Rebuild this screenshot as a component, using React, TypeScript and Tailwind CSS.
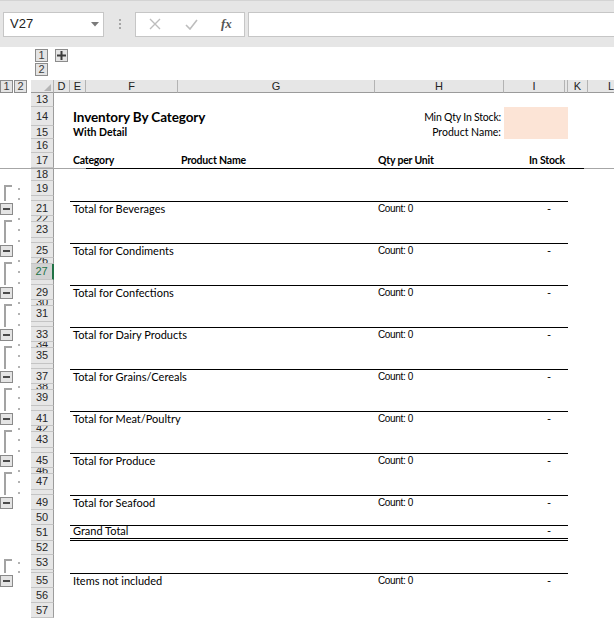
import React from 'react'

type Outline = 's' | 'm' | 'x'
type Kind = 'title' | 'sub' | 'hdr' | 'total' | 'grand' | 'items' | 'freeze'

type RowDef = {
  n: string
  h: number
  ol?: Outline
  kind?: Kind
  label?: string
}

const HEIGHT: Record<number, string> = {
  1: 'h-[1px]',
  3: 'h-[3px]',
  5: 'h-[5px]',
  6: 'h-[6px]',
  12: 'h-[12px]',
  13: 'h-[13px]',
  14: 'h-[14px]',
  15: 'h-[15px]',
  16: 'h-[16px]',
  19: 'h-[19px]',
}

const cats = ['Beverages', 'Condiments', 'Confections', 'Dairy Products', 'Grains/Cereals', 'Meat/Poultry', 'Produce', 'Seafood']

function buildRows(): RowDef[] {
  const rows: RowDef[] = [
    { n: '13', h: 14 },
    { n: '14', h: 19, kind: 'title' },
    { n: '15', h: 13, kind: 'sub' },
    { n: '16', h: 14 },
    { n: '17', h: 15, kind: 'hdr' },
    { n: '', h: 1, kind: 'freeze' },
    { n: '18', h: 12 },
    { n: '19', h: 15, ol: 's' },
    { n: '20', h: 5, ol: 'm' },
    { n: '21', h: 15, ol: 'x', kind: 'total', label: 'Total for Beverages' },
  ]
  for (let i = 1; i < cats.length; i++) {
    const base = 22 + 4 * (i - 1)
    rows.push({ n: String(base), h: 6, ol: 's' })
    rows.push({ n: String(base + 1), h: 16, ol: 'm' })
    rows.push({ n: String(base + 2), h: 5, ol: 'm' })
    rows.push({ n: String(base + 3), h: 15, ol: 'x', kind: 'total', label: `Total for ${cats[i]}` })
  }
  rows.push(
    { n: '50', h: 15 },
    { n: '51', h: 16, kind: 'grand' },
    { n: '52', h: 14 },
    { n: '53', h: 15, ol: 's' },
    { n: '54', h: 3, ol: 'm' },
    { n: '55', h: 15, ol: 'x', kind: 'items', label: 'Items not included' },
    { n: '56', h: 15 },
    { n: '57', h: 15 },
  )
  return rows
}

const calibri = "font-['Lato','Noto_Sans',sans-serif]"
const arial = "font-['Liberation_Sans',Arial,sans-serif]"

function Dot() {
  return <div className="absolute left-[18px] top-1/2 h-[2px] w-[2px] -translate-y-1/2 bg-[#b3b3b3]" />
}

function OutlineCell({ ol }: { ol?: Outline }) {
  return (
    <div className="relative w-[31px] shrink-0">
      {ol === 's' ? (
        <>
          <div className="absolute bottom-0 left-[4px] top-[4px] w-[2px] bg-[#a3a3a3]" />
          <div className="absolute left-[4px] top-[4px] h-[2px] w-[8px] bg-[#a3a3a3]" />
          <Dot />
        </>
      ) : null}
      {ol === 'm' ? (
        <>
          <div className="absolute bottom-0 left-[4px] top-0 w-[2px] bg-[#a3a3a3]" />
          <Dot />
        </>
      ) : null}
      {ol === 'x' ? (
        <div className="absolute left-0 top-1/2 flex h-[12px] w-[13px] -translate-y-1/2 items-center justify-center border border-[#8a8a8a] bg-[#e4e4e4]">
          <div className="h-[2px] w-[7px] bg-[#4a4a4a]" />
        </div>
      ) : null}
    </div>
  )
}

function RowHeader({ n, h, selected }: { n: string; h: number; selected: boolean }) {
  return (
    <div
      className={
        selected
          ? `flex w-[23px] shrink-0 items-center justify-center overflow-hidden border-b border-r-2 border-b-[#c4c4c4] border-r-[#217346] bg-[#d2d2d2] text-[11px] leading-none text-[#217346] ${arial}`
          : `flex w-[23px] shrink-0 items-center justify-center overflow-hidden border-b border-r border-b-[#c4c4c4] border-r-[#9c9c9c] bg-[#e6e6e6] text-[11px] leading-none text-[#262626] ${arial}`
      }
    >
      {h > 5 ? n : null}
    </div>
  )
}

function SpanContent({ r }: { r: RowDef }) {
  const text = `whitespace-nowrap text-[11px] leading-[13px] text-black ${calibri}`
  const small = `whitespace-nowrap text-[10.5px] leading-[13px] text-black ${calibri}`
  if (r.kind === 'title') {
    return (
      <div className="flex h-full items-end">
        <div className="w-[305px] pb-[1px] pl-[3px]">
          <div className={`whitespace-nowrap text-[13.5px] font-bold leading-[16px] tracking-[-0.1px] text-black ${calibri}`}>
            Inventory By Category
          </div>
        </div>
        <div className={`w-[129px] pb-[2px] pr-[3px] text-right tracking-[-0.2px] ${small}`}>Min Qty In Stock:</div>
        <div className="h-full w-[64px] bg-[#fce4d6]" />
      </div>
    )
  }
  if (r.kind === 'sub') {
    return (
      <div className="flex h-full items-end">
        <div className={`w-[305px] pl-[3px] font-bold ${small}`}>With Detail</div>
        <div className={`w-[129px] pr-[3px] text-right ${small}`}>Product Name:</div>
        <div className="h-full w-[64px] bg-[#fce4d6]" />
      </div>
    )
  }
  if (r.kind === 'hdr') {
    return (
      <div className={`flex h-full items-end pb-[1px] font-bold tracking-[-0.2px] ${small}`}>
        <div className="w-[108px] pl-[3px]">Category</div>
        <div className="w-[197px] pl-[3px]">Product Name</div>
        <div className="w-[129px] pl-[3px]">Qty per Unit</div>
        <div className="w-[64px] pr-[3px] text-right">In Stock</div>
      </div>
    )
  }
  if (r.kind === 'total' || r.kind === 'items' || r.kind === 'grand') {
    return (
      <div className="flex h-full items-end pb-[1px]">
        <div className={`w-[305px] pl-[3px] ${text}`}>{r.kind === 'grand' ? 'Grand Total' : r.label}</div>
        <div className={`w-[129px] pl-[3px] text-[10px] leading-[13px] tracking-[-0.35px] text-black ${arial}`}>
          {r.kind === 'grand' ? '' : 'Count: 0'}
        </div>
        <div className={`w-[64px] pr-[17px] text-right ${text}`}>-</div>
      </div>
    )
  }
  return null
}

function SheetRow({ r }: { r: RowDef }) {
  if (r.kind === 'freeze') {
    return (
      <div className="flex h-[1px] bg-[#a6a6a6]">
        <div className="w-[86px] shrink-0" />
        <div className="h-full w-[498px] shrink-0 bg-black" />
      </div>
    )
  }
  let spanBorder = ''
  if (r.kind === 'total' || r.kind === 'items') spanBorder = 'border-t border-black'
  if (r.kind === 'grand') spanBorder = 'border-t border-b-[3px] border-double border-black'
  return (
    <div className={`flex ${HEIGHT[r.h]}`}>
      <OutlineCell ol={r.ol} />
      <RowHeader n={r.n} h={r.h} selected={r.n === '27'} />
      <div className="w-[16px] shrink-0" />
      <div className={`w-[498px] shrink-0 ${spanBorder}`}>
        <SpanContent r={r} />
      </div>
      <div className="flex-1" />
    </div>
  )
}

function LevelButton({ label }: { label: string }) {
  return (
    <div className={`flex h-[13px] w-[13px] items-center justify-center border border-[#8c8c8c] bg-[#e4e4e4] text-[11px] leading-none text-[#3c3c3c] ${arial}`}>
      {label}
    </div>
  )
}

function ColHeader({ label, w }: { label: string; w: string }) {
  return (
    <div className={`flex shrink-0 items-center justify-center border-b border-r border-b-[#9b9b9b] border-r-[#b3b3b3] bg-[#e6e6e6] text-[11px] leading-none text-[#222] ${w} ${arial}`}>
      {label}
    </div>
  )
}

export default function App() {
  const rows = buildRows()
  return (
    <div className="h-[618px] w-[614px] overflow-hidden bg-white">
      {/* formula bar */}
      <div className="flex h-[47px] items-center border-t border-[#d4d4d4] bg-[#e6e6e6]">
        <div className="ml-[3px] flex h-[25px] w-[101px] items-center justify-between border border-[#c6c6c6] bg-white pl-[6px] pr-[4px]">
          <span className={`text-[13px] text-[#222] ${arial}`}>V27</span>
          <svg width="8" height="5" viewBox="0 0 8 5">
            <path d="M0 0h8L4 4.5z" fill="#7a7a7a" />
          </svg>
        </div>
        <div className="flex w-[31px] flex-col items-center gap-[2px]">
          <div className="h-[2px] w-[2px] bg-[#a6a6a6]" />
          <div className="h-[2px] w-[2px] bg-[#a6a6a6]" />
          <div className="h-[2px] w-[2px] bg-[#a6a6a6]" />
        </div>
        <div className="flex h-[25px] w-[110px] items-center border border-[#c6c6c6] bg-white">
          <svg className="ml-[13px]" width="12" height="12" viewBox="0 0 12 12">
            <path d="M1 1l10 10M11 1L1 11" stroke="#bdbdbd" strokeWidth="1.4" />
          </svg>
          <svg className="ml-[24px]" width="13" height="11" viewBox="0 0 13 11">
            <path d="M1 6l4 4 7-9" stroke="#bdbdbd" strokeWidth="1.6" fill="none" />
          </svg>
          <span className="ml-[23px] font-['Liberation_Serif',serif] text-[13px] font-bold italic text-[#555]">fx</span>
        </div>
        <div className="ml-[3px] h-[25px] flex-1 border border-r-0 border-[#c6c6c6] bg-white" />
      </div>

      {/* column outline buttons */}
      <div className="flex h-[33px] items-start pl-[35px] pt-[2px]">
        <div className="flex flex-col gap-[1px]">
          <LevelButton label="1" />
          <LevelButton label="2" />
        </div>
        <div className="ml-[7px] flex h-[13px] w-[13px] items-center justify-center border border-[#8c8c8c] bg-[#e4e4e4]">
          <svg width="9" height="9" viewBox="0 0 9 9">
            <path d="M4.5 0v9M0 4.5h9" stroke="#3c3c3c" strokeWidth="2" />
          </svg>
        </div>
      </div>

      {/* column headers */}
      <div className="flex h-[13px]">
        <div className="flex w-[31px] shrink-0 gap-[1px]">
          <LevelButton label="1" />
          <LevelButton label="2" />
        </div>
        <div className="relative w-[23px] shrink-0 border-b border-r border-b-[#9b9b9b] border-r-[#b3b3b3] bg-[#e6e6e6]">
          <svg className="absolute bottom-[1px] right-[2px]" width="7" height="7" viewBox="0 0 7 7">
            <path d="M7 0v7H0z" fill="#b5b5b5" />
          </svg>
        </div>
        <ColHeader label="D" w="w-[16px]" />
        <ColHeader label="E" w="w-[16px]" />
        <ColHeader label="F" w="w-[92px]" />
        <ColHeader label="G" w="w-[197px]" />
        <ColHeader label="H" w="w-[129px]" />
        <ColHeader label="I" w="w-[61px]" />
        <ColHeader label="" w="w-[3px]" />
        <ColHeader label="K" w="w-[20px]" />
        <div className={`flex flex-1 items-center border-b border-b-[#9b9b9b] bg-[#e6e6e6] text-[11px] leading-none text-[#222] ${arial}`}>
          <span className="w-[46px] shrink-0 text-center">L</span>
        </div>
      </div>

      {rows.map((r, i) => (
        <SheetRow key={i} r={r} />
      ))}
    </div>
  )
}
